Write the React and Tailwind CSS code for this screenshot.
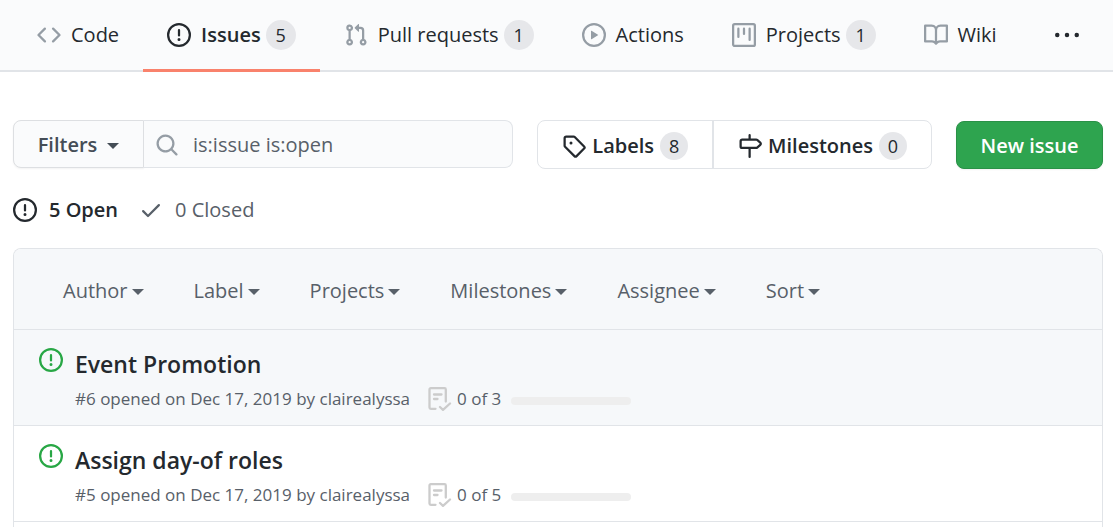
const ICONS = {
  code: "M4.72 3.22a.75.75 0 011.06 1.06L2.06 8l3.72 3.72a.75.75 0 11-1.06 1.06L.47 8.53a.75.75 0 010-1.06l4.25-4.25zm6.56 0a.75.75 0 10-1.06 1.06L13.94 8l-3.72 3.72a.75.75 0 101.06 1.06l4.25-4.25a.75.75 0 000-1.06l-4.25-4.25z",
  issue: "M8 1.5a6.5 6.5 0 100 13 6.5 6.5 0 000-13zM0 8a8 8 0 1116 0A8 8 0 010 8zm9 3a1 1 0 11-2 0 1 1 0 012 0zm-.25-6.25a.75.75 0 00-1.5 0v3.5a.75.75 0 001.5 0v-3.5z",
  pull: "M7.177 3.073L9.573.677A.25.25 0 0110 .854v4.792a.25.25 0 01-.427.177L7.177 3.427a.25.25 0 010-.354zM3.75 2.5a.75.75 0 100 1.5.75.75 0 000-1.5zm-2.25.75a2.25 2.25 0 113 2.122v5.256a2.251 2.251 0 11-1.5 0V5.372A2.25 2.25 0 011.5 3.25zM11 2.5h-1V4h1a1 1 0 011 1v5.628a2.251 2.251 0 101.5 0V5A2.5 2.5 0 0011 2.5zm1 10.25a.75.75 0 111.5 0 .75.75 0 01-1.5 0zM3.75 12a.75.75 0 100 1.5.75.75 0 000-1.5z",
  play: "M1.5 8a6.5 6.5 0 1113 0 6.5 6.5 0 01-13 0zM8 0a8 8 0 100 16A8 8 0 008 0zM6.379 5.227A.25.25 0 006 5.442v5.117a.25.25 0 00.379.214l4.264-2.559a.25.25 0 000-.428L6.379 5.227z",
  project: "M1.75 0A1.75 1.75 0 000 1.75v12.5C0 15.216.784 16 1.75 16h12.5A1.75 1.75 0 0016 14.25V1.75A1.75 1.75 0 0014.25 0H1.75zM1.5 1.75a.25.25 0 01.25-.25h12.5a.25.25 0 01.25.25v12.5a.25.25 0 01-.25.25H1.75a.25.25 0 01-.25-.25V1.75zM11.75 3a.75.75 0 00-.75.75v7.5a.75.75 0 001.5 0v-7.5a.75.75 0 00-.75-.75zm-8.25.75a.75.75 0 011.5 0v5.5a.75.75 0 01-1.5 0v-5.5zM8 3a.75.75 0 00-.75.75v3.5a.75.75 0 001.5 0v-3.5A.75.75 0 008 3z",
  book: "M0 1.75A.75.75 0 01.75 1h4.253c1.227 0 2.317.59 3 1.501A3.744 3.744 0 0111.006 1h4.245a.75.75 0 01.75.75v10.5a.75.75 0 01-.75.75h-4.507a2.25 2.25 0 00-1.591.659l-.622.621a.75.75 0 01-1.06 0l-.622-.621A2.25 2.25 0 005.258 13H.75a.75.75 0 01-.75-.75V1.75zm8.755 3a2.25 2.25 0 012.25-2.25H14.5v9h-3.757c-.71 0-1.4.201-1.992.572l.004-7.322zm-1.504 7.324l.004-5.073-.002-2.253A2.25 2.25 0 005.003 2.5H1.5v9h3.757a3.75 3.75 0 011.994.574z",
  more: "M8 9.5a1.5 1.5 0 100-3 1.5 1.5 0 000 3zM1.5 9.5a1.5 1.5 0 100-3 1.5 1.5 0 000 3zm13 0a1.5 1.5 0 100-3 1.5 1.5 0 000 3z",
  search: "M11.5 7a4.499 4.499 0 11-8.998 0A4.499 4.499 0 0111.5 7zm-.82 4.74a6 6 0 111.06-1.06l3.04 3.04a.75.75 0 11-1.06 1.06l-3.04-3.04z",
  tag: "M2.5 7.775V2.75a.25.25 0 01.25-.25h5.025a.25.25 0 01.177.073l6.25 6.25a.25.25 0 010 .354l-5.025 5.025a.25.25 0 01-.354 0l-6.25-6.25a.25.25 0 01-.073-.177zm-1.5 0V2.75C1 1.784 1.784 1 2.75 1h5.025c.464 0 .91.184 1.238.513l6.25 6.25a1.75 1.75 0 010 2.474l-5.026 5.026a1.75 1.75 0 01-2.474 0l-6.25-6.25A1.75 1.75 0 011 7.775zM6 5a1 1 0 100 2 1 1 0 000-2z",
  milestone: "M7.75 0a.75.75 0 01.75.75V3h3.634c.414 0 .814.147 1.13.414l2.07 1.75a1.75 1.75 0 010 2.672l-2.07 1.75a1.75 1.75 0 01-1.13.414H8.5v5.25a.75.75 0 11-1.5 0V10H2.75A1.75 1.75 0 011 8.25v-3.5C1 3.784 1.784 3 2.75 3H7V.75A.75.75 0 017.75 0zm0 8.5h4.384a.25.25 0 00.161-.06l2.07-1.75a.25.25 0 000-.38l-2.07-1.75a.25.25 0 00-.161-.06H2.75a.25.25 0 00-.25.25v3.5c0 .138.112.25.25.25h5z",
  check: "M13.78 4.22a.75.75 0 010 1.06l-7.25 7.25a.75.75 0 01-1.06 0L2.22 9.28a.75.75 0 011.06-1.06L6 10.94l6.72-6.72a.75.75 0 011.06 0z",
};

function Icon({ name, className = "" }) {
  return (
    <svg viewBox="0 0 16 16" aria-hidden="true" className={`size-6 shrink-0 fill-current ${className}`}>
      <path fillRule="evenodd" d={ICONS[name]} />
    </svg>
  );
}

function ChecklistIcon() {
  return (
    <svg
      viewBox="0 0 24 24"
      aria-hidden="true"
      className="size-6 shrink-0 fill-none stroke-[#cccccc]"
      strokeWidth="2.3"
      strokeLinecap="round"
      strokeLinejoin="round"
    >
      <path d="M7.5 21.8H2.8A1.3 1.3 0 0 1 1.5 20.500V2.500A1.300 1.300 0 0 1 2.800 1.200H16.500A1.300 1.300 0 0 1 17.800 2.500V14.500" />
      <path d="M6 7.500H13.500M6 12H9.500M12 20L15 22.800L22 16.500" />
    </svg>
  );
}

function Caret() {
  return (
    <svg viewBox="0 0 12 6" aria-hidden="true" className="mt-0.5 h-1.5 w-3 shrink-0 fill-current">
      <path d="M0 0H12L6 6Z" />
    </svg>
  );
}

function Counter({ children, small }) {
  return (
    <span
      className={`flex items-center justify-center rounded-full bg-[#e6e7ea] px-2 text-[18px] font-normal text-[#24292e] ${
        small ? "h-7 min-w-7" : "h-[30px] min-w-[30px]"
      }`}
    >
      {children}
    </span>
  );
}

const tabs = [
  { icon: "code", label: "Code" },
  { icon: "issue", label: "Issues", count: 5, active: true },
  { icon: "pull", label: "Pull requests", count: 1 },
  { icon: "play", label: "Actions" },
  { icon: "project", label: "Projects", count: 1 },
  { icon: "book", label: "Wiki" },
];

const filters = ["Author", "Label", "Projects", "Milestones", "Assignee", "Sort"];

const issues = [
  { number: 6, title: "Event Promotion", total: 3, highlighted: true },
  { number: 5, title: "Assign day-of roles", total: 5 },
];

function Tab({ icon, label, count, active }) {
  return (
    <a
      href="#"
      aria-current={active ? "page" : undefined}
      className={`flex items-center gap-[5px] border-b-[3px] px-6 pt-px whitespace-nowrap ${
        active ? "border-[#f9826c] font-semibold" : "border-transparent"
      }`}
    >
      <Icon name={icon} className={active ? "mr-[5px]" : "mr-[5px] text-[#959da5]"} />
      {label}
      {count !== undefined && <Counter>{count}</Counter>}
    </a>
  );
}

function Issue({ number, title, total, highlighted }) {
  return (
    <li
      className={`flex h-24 gap-3 border-b border-[#e1e4e8] pt-[18px] pl-[25px] ${
        highlighted ? "bg-[#f6f8fa]" : "bg-white"
      }`}
    >
      <Icon name="issue" className="text-[#28a745]" />
      <div>
        <a href="#" className="block text-[23px] leading-8 font-semibold">
          {title}
        </a>
        <div className="mt-[5px] flex h-7 items-center text-[17px] whitespace-nowrap text-[#586069]">
          <span className="mr-[18px]">#{number} opened on Dec 17, 2019 by clairealyssa</span>
          <ChecklistIcon />
          <span className="mr-2.5 ml-[5px]">0 of {total}</span>
          <div
            role="progressbar"
            aria-label="Completed tasks"
            aria-valuemin={0}
            aria-valuemax={total}
            aria-valuenow={0}
            className="mt-1 h-2 w-[120px] rounded-full bg-[#eeeeee]"
          />
        </div>
      </div>
    </li>
  );
}

export default function App() {
  return (
    <div className="bg-white font-['Open_Sans','Noto_Sans',sans-serif] text-[20px] leading-7 text-[#24292e]">
      <header className="flex h-[72px] items-center border-b-2 border-[#e1e4e8] bg-[#fafbfc] pr-[34px] pl-[13px]">
        <nav aria-label="Repository" className="-mb-0.5 flex h-[72px]">
          {tabs.map((tab) => (
            <Tab key={tab.label} {...tab} />
          ))}
        </nav>
        <button type="button" aria-label="More" className="ml-auto flex">
          <Icon name="more" />
        </button>
      </header>

      <main className="pt-12 pr-[10px] pl-[13px]">
        <div className="flex gap-6">
          <form className="flex h-12 min-w-0 flex-1 text-[#586069]">
            <button
              type="button"
              className="flex w-[131px] shrink-0 items-center justify-center gap-2.5 rounded-l-lg border border-[#dddfe2] bg-[#fafbfc] pt-0.5 font-semibold text-[#444d56] shadow-xs"
            >
              Filters
              <Caret />
            </button>
            <label className="flex min-w-0 flex-1 items-center gap-3.5 rounded-r-lg border border-l-0 border-[#e1e4e8] bg-[#fafbfc] pt-0.5 pl-[11px]">
              <Icon name="search" className="text-[#959da5]" />
              <input
                type="text"
                aria-label="Search issues"
                defaultValue="is:issue is:open"
                className="w-full min-w-0 bg-transparent outline-none"
              />
            </label>
          </form>
          <nav aria-label="Issue metadata" className="flex h-[49px] rounded-lg border border-[#e1e4e8] font-semibold">
            <a href="#" className="flex items-center gap-1.5 border-r-2 border-[#e1e4e8] px-6 pt-0.5">
              <Icon name="tag" />
              Labels
              <Counter small>8</Counter>
            </a>
            <a href="#" className="flex items-center gap-1.5 px-6 pt-0.5">
              <Icon name="milestone" />
              Milestones
              <Counter small>0</Counter>
            </a>
          </nav>
          <button
            type="button"
            className="mt-px h-12 w-[147px] shrink-0 rounded-lg border border-[#2a9147] bg-[#2ea44f] pt-0.5 font-semibold text-white shadow-xs"
          >
            New issue
          </button>
        </div>

        <div className="mt-[27px] flex items-center">
          <a href="#" className="flex items-center gap-3 font-semibold">
            <Icon name="issue" />5 Open
          </a>
          <a href="#" className="ml-[21px] flex items-center gap-3 text-[#586069]">
            <Icon name="check" />0 Closed
          </a>
        </div>

        <section className="mt-6 overflow-hidden rounded-t-lg border border-b-0 border-[#e1e4e8]">
          <div className="flex h-[81px] items-center gap-[50px] border-b border-[#e1e4e8] bg-[#f6f8fa] pt-1 pl-[49px] text-[#586069]">
            {filters.map((filter) => (
              <button key={filter} type="button" className="flex items-center gap-1">
                {filter}
                <Caret />
              </button>
            ))}
          </div>
          <ul className="pb-1.5">
            {issues.map((issue) => (
              <Issue key={issue.number} {...issue} />
            ))}
          </ul>
        </section>
      </main>
    </div>
  );
}
